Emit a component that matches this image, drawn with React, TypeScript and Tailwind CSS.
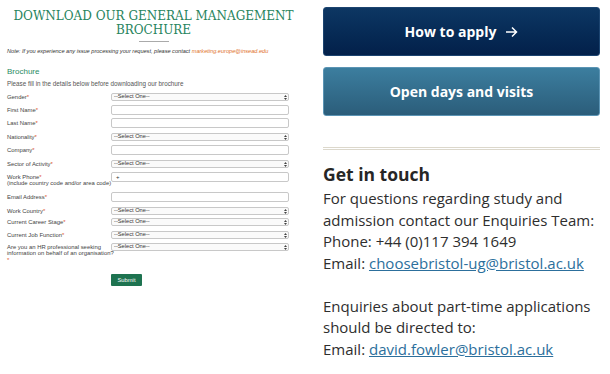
import React from "react";

type Row = {
  label: React.ReactNode;
  type: "select" | "input" | "phone";
  mt: number;
};

const Star = () => <span className="text-[#e0522a]">*</span>;

const rows: Row[] = [
  { label: <>Gender<Star /></>, type: "select", mt: 0 },
  { label: <>First Name<Star /></>, type: "input", mt: 4 },
  { label: <>Last Name<Star /></>, type: "input", mt: 3 },
  { label: <>Nationality<Star /></>, type: "select", mt: 5 },
  { label: <>Company<Star /></>, type: "input", mt: 4 },
  { label: <>Sector of Activity<Star /></>, type: "select", mt: 5 },
  {
    label: (
      <>
        Work Phone<Star />
        <br />
        (include country code and/or area code)
      </>
    ),
    type: "phone",
    mt: 4,
  },
  { label: <>Email Address<Star /></>, type: "input", mt: 10 },
  { label: <>Work Country<Star /></>, type: "select", mt: 5 },
  { label: <>Current Career Stage<Star /></>, type: "select", mt: 3 },
  { label: <>Current Job Function<Star /></>, type: "select", mt: 5 },
  {
    label: (
      <>
        Are you an HR professional seeking
        <br />
        information on behalf of an organisation?
        <br />
        <Star />
      </>
    ),
    type: "select",
    mt: 4,
  },
];

function SelectBox() {
  return (
    <div className="flex h-[8px] w-[178px] items-center justify-between rounded-[2px] border border-[#c8c8c8] bg-[#fafafa] pl-[2px] pr-[1px]">
      <span className="text-[5.7px] leading-none text-[#333]">--Select One--</span>
      <svg width="3" height="5" viewBox="0 0 3 5">
        <path d="M1.5 0 L3 2 L0 2 Z" fill="#444" />
        <path d="M0 3 L3 3 L1.5 5 Z" fill="#444" />
      </svg>
    </div>
  );
}

function InputBox({ plus }: { plus?: boolean }) {
  return (
    <div className="flex h-[10px] w-[178px] items-center rounded-[2px] border border-[#c8c8c8] bg-white pl-[4px]">
      {plus && <span className="text-[6px] leading-none text-[#333]">+</span>}
    </div>
  );
}

function Form() {
  return (
    <div className="w-[300px] shrink-0 pl-[7px] font-['Liberation_Sans',Arial,sans-serif]">
      <div className="pt-[8px] text-center font-['DejaVu_Serif',serif] text-[12px] leading-[14px] text-[#27845d]">
        <div className="translate-y-[1px]">
          DOWNLOAD OUR GENERAL MANAGEMENT
          <br />
          BROCHURE
        </div>
      </div>
      <div className="mx-auto mt-[5px] h-px w-[30px] bg-[#aaa]" />
      <div className="mt-[6px] text-[5.6px] italic leading-[7px] text-[#333]">
        Note: If you experience any issue processing your request, please contact{" "}
        <span className="text-[#e0702a]">marketing.europe@insead.edu</span>
      </div>
      <div className="mt-[12px] text-[8px] leading-[10px] text-[#2a8a63]">Brochure</div>
      <div className="mt-[3px] text-[6.3px] leading-[7px] text-[#555]">
        Please fill in the details below before downloading our brochure
      </div>
      <div className="mt-[6px]">
        {rows.map((r, i) => {
          const h = r.type === "select" ? 8 : 10;
          return (
            <div
              key={i}
              className="flex items-start"
              style={{ marginTop: r.mt, height: h }}
            >
              <div
                className="w-[104px] shrink-0 whitespace-nowrap text-[5.9px] leading-[6.7px] text-[#444]"
                style={{ paddingTop: (h - 6.7) / 2 }}
              >
                {r.label}
              </div>
              {r.type === "select" ? (
                <SelectBox />
              ) : (
                <InputBox plus={r.type === "phone"} />
              )}
            </div>
          );
        })}
      </div>
      <div className="ml-[104px] mt-[23px] flex h-[12px] w-[31px] items-center justify-center rounded-[1px] bg-[#1e7350] text-[5.8px] text-white">
        Submit
      </div>
    </div>
  );
}

function Contact() {
  return (
    <div className="ml-[23px] w-[277px] shrink-0 font-['Open_Sans',sans-serif]">
      <div className="mt-[7px] flex h-[49px] items-center justify-center gap-[9px] rounded-[3px] border border-[#1c4470] bg-gradient-to-b from-[#0d3763] to-[#03204a] text-[14px] font-bold text-white">
        <span>How to apply</span>
        <svg width="13" height="12" viewBox="0 0 13 12" fill="none">
          <path d="M1 6 H11.5 M7 1.5 L11.5 6 L7 10.5" stroke="white" strokeWidth="1.5" />
        </svg>
      </div>
      <div className="mt-[11px] flex h-[49px] items-center justify-center rounded-[3px] border border-[#5b94b4] bg-gradient-to-b from-[#3c7e9f] to-[#2b5d7a] text-[14px] font-bold text-white">
        Open days and visits
      </div>
      <div className="mt-[31px] h-px bg-[#dcd8cc]" />
      <div className="mt-[1px] h-px bg-[#dcd8cc]" />
      <div className="mt-[11px] text-[17.5px] font-bold leading-[26px] text-[#262626]">
        Get in touch
      </div>
      <div className="mt-[1px] text-[15px] leading-[21.5px] text-[#2e2e2e]">
        For questions regarding study and
        <br />
        admission contact our Enquiries Team:
        <br />
        Phone: +44 (0)117 394 1649
        <br />
        Email:{" "}
        <span className="text-[#2c6f9c] underline">choosebristol-ug@bristol.ac.uk</span>
        <br />
        <br />
        Enquiries about part-time applications
        <br />
        should be directed to:
        <br />
        Email:{" "}
        <span className="text-[#2c6f9c] underline">david.fowler@bristol.ac.uk</span>
      </div>
    </div>
  );
}

export default function App() {
  return (
    <div className="flex h-[374px] w-[610px] overflow-hidden bg-white">
      <Form />
      <Contact />
    </div>
  );
}
